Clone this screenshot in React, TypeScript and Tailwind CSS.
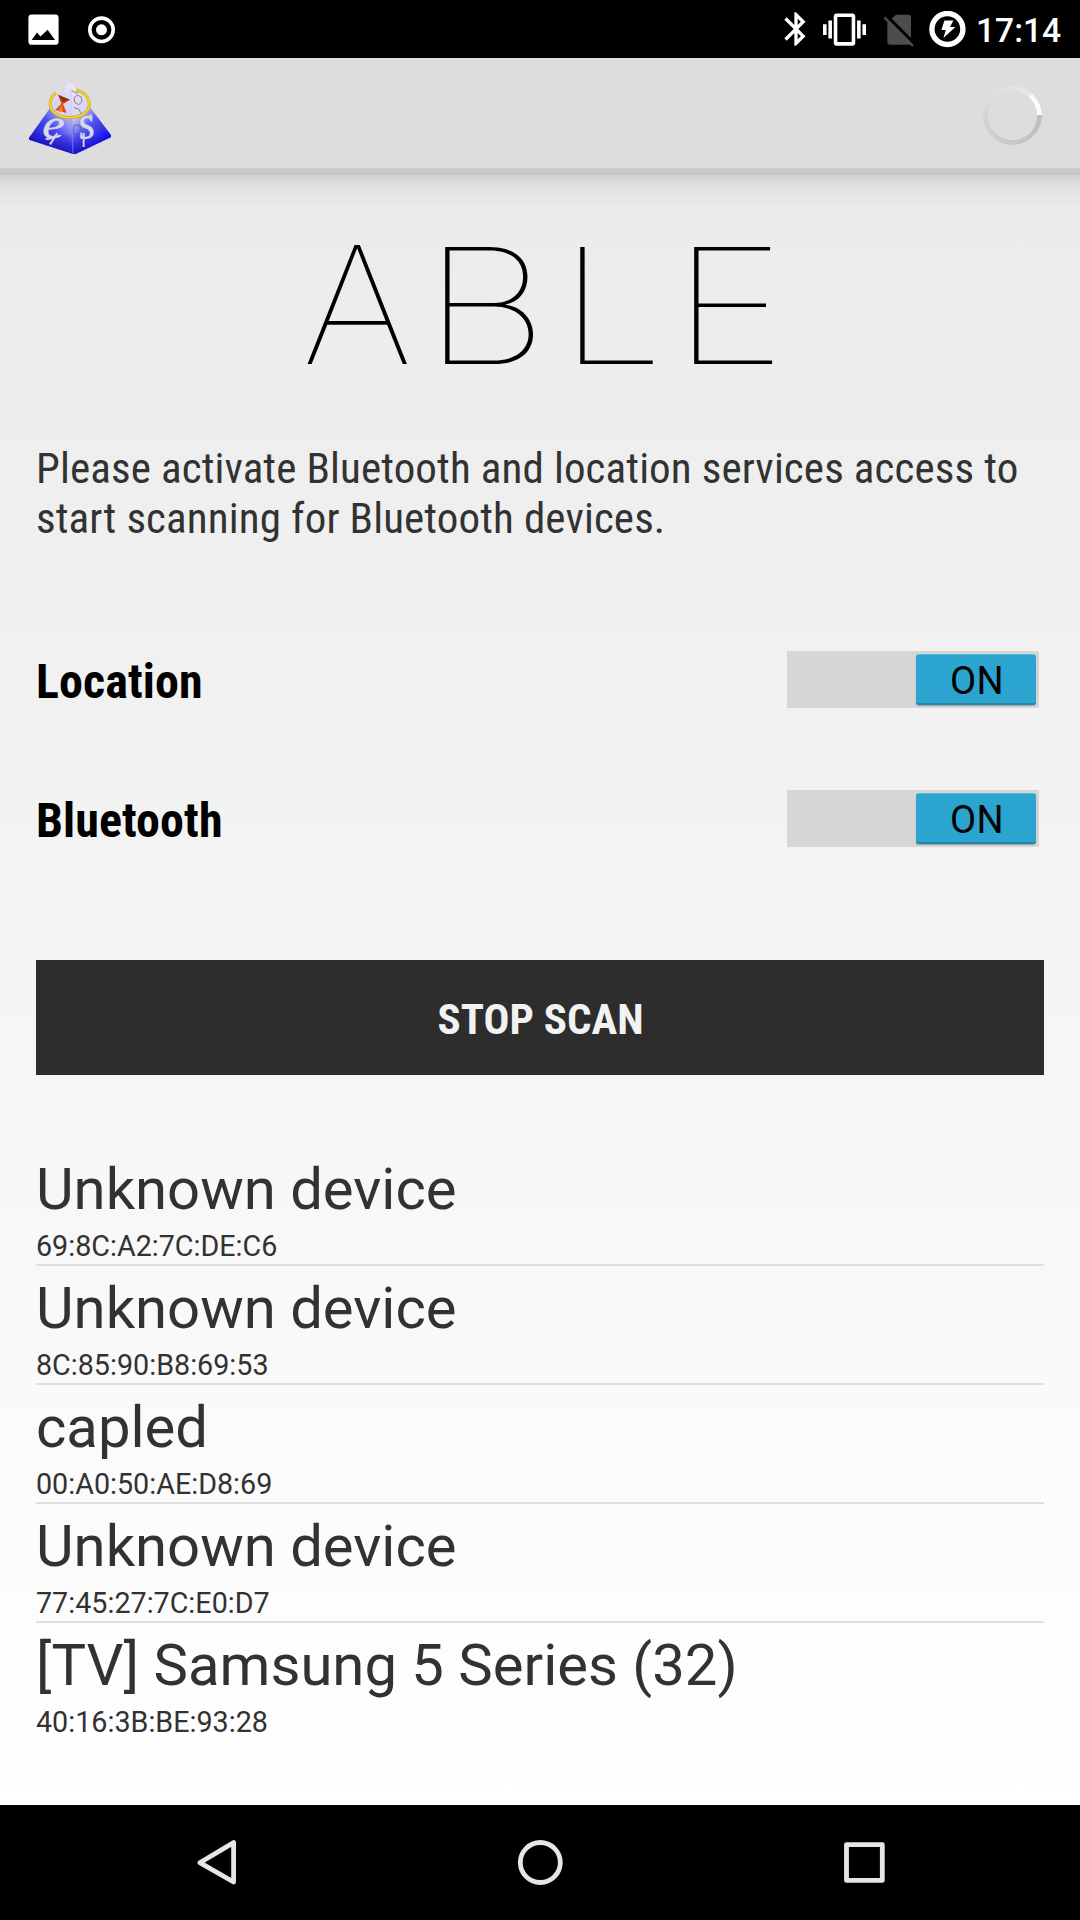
const devices = [
  { name: "Unknown device", address: "69:8C:A2:7C:DE:C6" },
  { name: "Unknown device", address: "8C:85:90:B8:69:53" },
  { name: "capled", address: "00:A0:50:AE:D8:69" },
  { name: "Unknown device", address: "77:45:27:7C:E0:D7" },
  { name: "[TV] Samsung 5 Series (32)", address: "40:16:3B:BE:93:28" },
];

function StatusBar() {
  return (
    <div className="flex h-[58px] items-center bg-black text-white">
      <svg className="ml-[28px] h-[31px] w-[31px]" viewBox="0 0 31 31">
        <rect x="0.4" y="0.4" width="30.2" height="30.4" rx="3.4" fill="#fff" />
        <path d="M3.7 26 L9 18.6 L12.4 22.6 L19.6 15.7 L27 26 Z" fill="#000" />
      </svg>
      <svg className="ml-[28px] h-[29px] w-[29px]" viewBox="0 0 29 29">
        <circle cx="14.5" cy="14.8" r="11.7" fill="none" stroke="#fff" strokeWidth="3.6" />
        <circle cx="14.5" cy="14.8" r="5.5" fill="#fff" />
      </svg>
      <svg className="ml-[660px] h-[40px] w-[40px]" viewBox="0 0 24 24" fill="#fff">
        <path d="M17.71 7.71L12 2h-1v7.59L6.41 5 5 6.41 10.59 12 5 17.59 6.41 19 11 14.41V22h1l5.71-5.71-4.3-4.29 4.3-4.29zM13 5.83l1.88 1.88L13 9.59V5.83zm1.88 10.46L13 18.17v-3.76l1.88 1.88z" />
      </svg>
      <svg className="ml-[7px] h-[43px] w-[43px]" viewBox="0 0 24 24" fill="#fff">
        <path d="M0 15h2V9H0v6zm3 2h2V7H3v10zm19-8v6h2V9h-2zm-3 8h2V7h-2v10zM16.5 3h-9C6.67 3 6 3.67 6 4.5v15c0 .83.67 1.5 1.5 1.5h9c.83 0 1.5-.67 1.5-1.5v-15c0-.83-.67-1.5-1.5-1.5zM16 19H8V5h8v14z" />
      </svg>
      <svg className="ml-[18px] mt-[2px] h-[33px] w-[30px]" viewBox="372 40 90 99">
        <path d="M408 42 H446 Q453 42 453 49 V132 H389 Q382 132 382 125 V66 Z" fill="#4d4d4d" />
        <path d="M382 47 L466 131" stroke="#000" strokeWidth="9" />
        <path d="M373 50 L459 136" stroke="#4d4d4d" strokeWidth="7" />
      </svg>
      <svg className="ml-[15px] h-[37px] w-[37px]" viewBox="0 0 37 37">
        <circle cx="18.4" cy="18" r="15.5" fill="none" stroke="#fff" strokeWidth="5.4" />
        <path d="M15.4 9.6 H24.4 L21 16 H26.4 L14.4 27 L16.8 19 H12.4 Z" fill="#fff" />
      </svg>
      <span className="ml-[10px] mt-[3px] text-[33.6px] leading-[40px] font-medium">17:14</span>
    </div>
  );
}

function Logo() {
  return (
    <svg className="h-[76px] w-[84px]" viewBox="84 234 252 228">
      <defs>
        <linearGradient id="left" x1="0.9" y1="0" x2="0.3" y2="1">
          <stop offset="0" stopColor="#f4f2fb" />
          <stop offset="0.4" stopColor="#a9a8f2" />
          <stop offset="0.62" stopColor="#4c4cf0" />
          <stop offset="1" stopColor="#1512c4" />
        </linearGradient>
        <linearGradient id="right" x1="0.1" y1="0" x2="0.7" y2="1">
          <stop offset="0" stopColor="#f3f3f6" />
          <stop offset="0.4" stopColor="#c2c2f2" />
          <stop offset="0.6" stopColor="#5656f6" />
          <stop offset="1" stopColor="#0a06ee" />
        </linearGradient>
        <linearGradient id="base" x1="0" y1="0" x2="0" y2="1">
          <stop offset="0.6" stopColor="#0900a8" stopOpacity="0" />
          <stop offset="1" stopColor="#0900a8" stopOpacity="0.65" />
        </linearGradient>
      </defs>
      <path d="M209 238 L87 410 V416 L219 459 Z" fill="url(#left)" />
      <path d="M209 238 L219 459 H227 L333 409 V402 Z" fill="url(#right)" />
      <path d="M165 300 L87 410 V416 L219 459 H227 L333 409 V402 L262 312 Z" fill="url(#base)" />
      <path d="M211 240 L219 459" stroke="#7777ff" strokeWidth="4" opacity="0.6" />
      <ellipse cx="209" cy="309" rx="55" ry="38" fill="#e3dcf4" opacity="0.75" />
      <path d="M209 237 L190 272 L224 272 Z" fill="#e6e2f4" />
      <g fill="none" stroke="#55556c" strokeWidth="3" opacity="0.65">
        <path d="M222 290 l10 -8 l12 6 l2 14 l-10 9 l-12 -7 Z M222 320 l14 4 l8 14 l-12 8 M220 384 l4 -12 h14 l6 14 l-8 14 h-14 Z M286 368 l14 2 l2 12 l-12 6 M214 268 l14 8 l12 -6 l10 12" />
      </g>
      <path d="M168 277 C148 290 148 316 156 327 C171 350 213 354 238 345 C265 335 273 316 265 296 C260 280 245 271 229 267" fill="none" stroke="#cfa81a" strokeWidth="9" />
      <path d="M168 277 C148 290 148 316 156 327 C171 350 213 354 238 345 C265 335 273 316 265 296 C260 280 245 271 229 267" fill="none" stroke="#f0da30" strokeWidth="5" />
      <path d="M174 281 L210 296 L189 309 L200 336 L166 327 L184 308 Z" fill="#d9480c" />
      <path d="M174 281 L210 296 L189 303 Z" fill="#8a3214" />
      <path d="M174 330 L186 311 L189 333 Z" fill="#ff7a24" />
      <g fill="#d8d8e6" stroke="#d8d8e6" strokeWidth="1.5" fontFamily="Liberation Serif" fontStyle="italic">
        <text x="0" y="0" fontSize="124" transform="translate(125 408) rotate(5) scale(1.18 1)">e</text>
        <text x="0" y="0" fontSize="140" transform="translate(240 415) rotate(-8) scale(0.9 1)">s</text>
      </g>
      <path d="M137 414 Q160 416 172 397 L150 430" fill="none" stroke="#d4d4e0" strokeWidth="6" />
      <path d="M251 396 V438 M272 340 V358" fill="none" stroke="#d4d4e0" strokeWidth="6" />
    </svg>
  );
}

function ActionBar() {
  return (
    <div>
      <div className="flex h-[110px] items-center justify-between border-t-2 border-[#e1e1e1] bg-[#dddddd] pl-[28px] pr-[38px]">
        <div className="mt-[5px]">
          <Logo />
        </div>
        <div className="mt-[3px] h-[59px] w-[59px] rounded-full bg-[conic-gradient(from_90deg,#bcbcbc_0deg,#c8c8c8_90deg,#d4d4d4_180deg,#dddddd_225deg,#e3e3e3_270deg,#e8e8e8_312deg,#fbfbfb_313deg,#fbfbfb_360deg)] [mask-image:radial-gradient(circle,transparent_24.2px,black_25px)]" />
      </div>
      <div className="h-[5px] bg-[#cbcbcb]" />
      <div className="h-[2px] bg-[#c3c3c3]" />
    </div>
  );
}

function Toggle({ label }: { label: string }) {
  return (
    <div className="flex h-[57px] items-center justify-between pr-[5px]">
      <span className="mt-[4px] font-['Roboto_Condensed'] text-[48px] leading-[56px] font-bold tracking-[0.1px] text-black">{label}</span>
      <div className="flex h-[57px] w-[252px] justify-end bg-[#d6d6d6] pt-[3px] pr-[3px]">
        <div className="flex h-[51px] w-[120px] items-center justify-center rounded-[3px] border-t border-b-2 border-t-[#55bbd9] border-b-[#2485a8] bg-[#2ba4d0] pl-[2px] shadow-[0_1px_1px_rgba(0,0,0,0.25)]">
          <span className="mt-[4px] text-[38px] leading-[44px] tracking-[0.4px] text-black">ON</span>
        </div>
      </div>
    </div>
  );
}

function NavBar() {
  return (
    <div className="flex h-[115px] justify-between bg-black pt-[34px] pl-[196px] pr-[194px]">
      <svg className="h-[48px] w-[42px]" viewBox="0 0 42 48" fill="none" stroke="#e6e6e6" strokeWidth="4.8" strokeLinejoin="round">
        <path d="M37.6 3.6 V43 L3.8 23.7 Z" />
      </svg>
      <svg className="h-[48px] w-[48px]" viewBox="0 0 48 48" fill="none" stroke="#e6e6e6" strokeWidth="4.8">
        <circle cx="23.3" cy="23.5" r="20" />
      </svg>
      <svg className="h-[48px] w-[42px]" viewBox="0 0 42 48" fill="none" stroke="#e6e6e6" strokeWidth="4.8" strokeLinejoin="round">
        <rect x="2.5" y="5.6" width="35.8" height="35.8" />
      </svg>
    </div>
  );
}

export default function App() {
  return (
    <div className="flex h-[1920px] w-[1080px] flex-col overflow-hidden font-['Roboto',sans-serif] text-[#323232]">
      <StatusBar />
      <ActionBar />
      <main className="flex-1 bg-[linear-gradient(to_bottom,rgba(0,0,0,0.11)_0px,rgba(0,0,0,0.045)_12px,rgba(0,0,0,0)_34px),linear-gradient(to_bottom,#ebebeb,#ffffff)] px-[36px] pt-[50px]">
        <h1 aria-label="ABLE" className="flex h-[160px] pl-[266px] font-['Inter'] text-[163px] leading-[160px] font-thin text-black">
          <span className="w-[121px] origin-left scale-x-[1.06]">A</span>
          <span className="w-[136px] origin-[0_140px] scale-x-[1.2] scale-y-[0.985]">B</span>
          <span className="w-[113px] origin-[0_140px] scale-x-[1.15] scale-y-[0.985]">L</span>
          <span className="w-[116px] origin-[0_140px] scale-x-[1.2] scale-y-[0.985]">E</span>
        </h1>
        <p className="mt-[58px] font-['Roboto_Condensed'] text-[43px] leading-[50px] tracking-[0.12px]">
          Please activate Bluetooth and location services access to start scanning for Bluetooth devices.
        </p>
        <div className="mt-[108px] flex flex-col gap-[82px]">
          <Toggle label="Location" />
          <Toggle label="Bluetooth" />
        </div>
        <button className="mt-[113px] flex h-[115px] w-full items-center justify-center bg-[#2d2d2d] pt-[2px] pl-px font-['Roboto_Condensed'] text-[43px] leading-[50px] font-bold text-[#f2f2f2]">
          STOP SCAN
        </button>
        <ul className="mt-[72px]">
          {devices.map((device) => (
            <li key={device.address} className="h-[119px] border-b-2 border-[#dfdfdf] pt-[8px] last:border-transparent">
              <div className="text-[58px] leading-[68px]">{device.name}</div>
              <div className="mt-[6px] text-[28.7px] leading-[34px]">{device.address}</div>
            </li>
          ))}
        </ul>
      </main>
      <NavBar />
    </div>
  );
}
